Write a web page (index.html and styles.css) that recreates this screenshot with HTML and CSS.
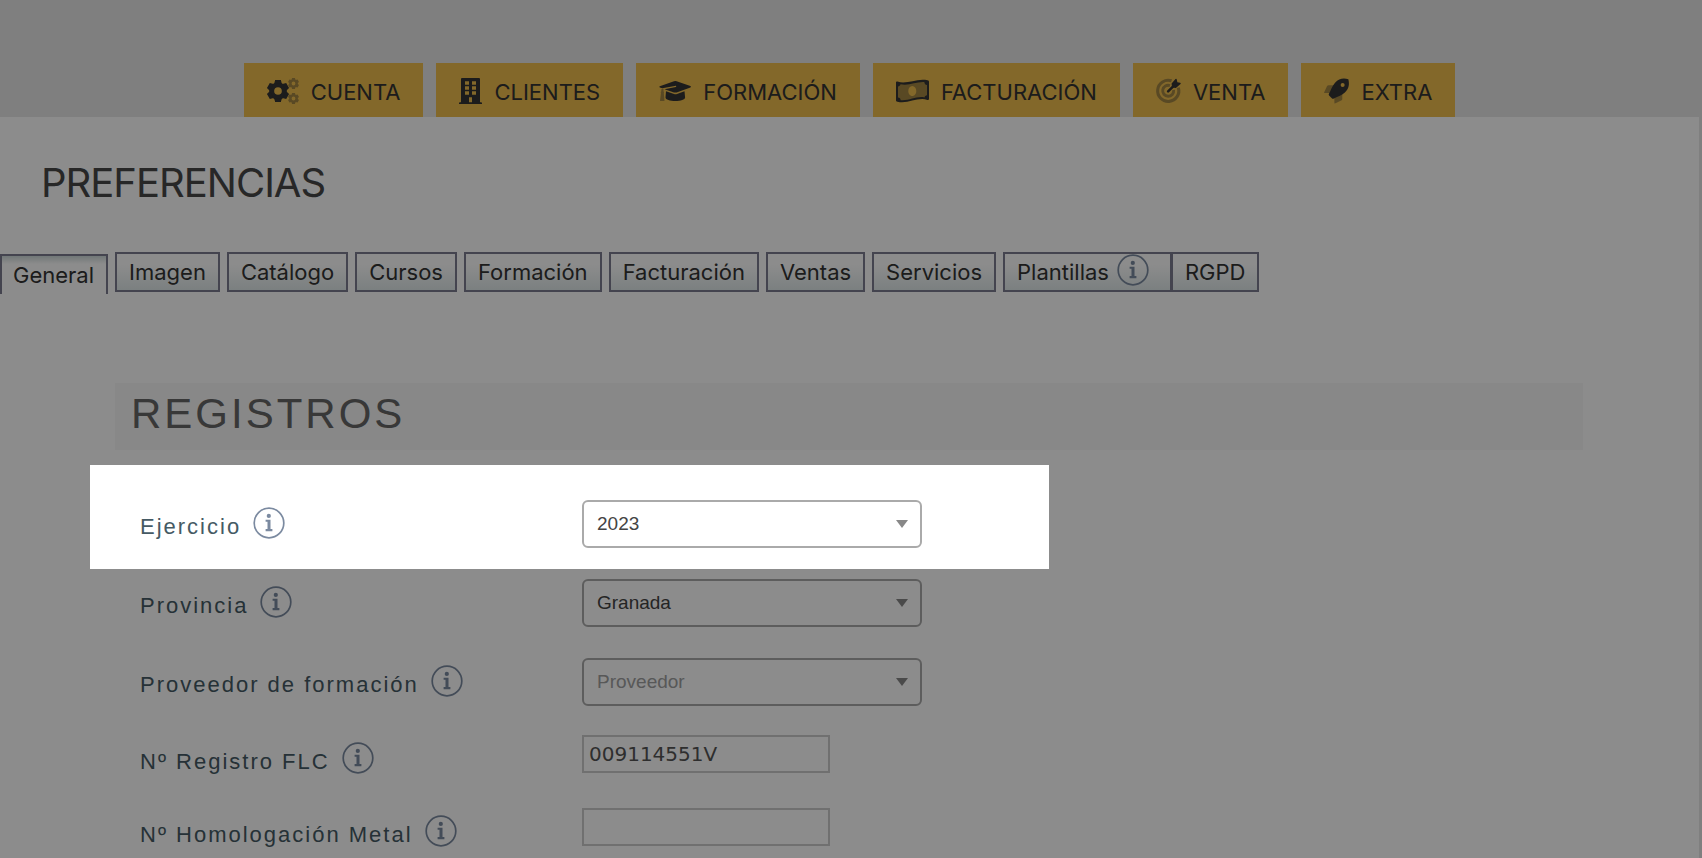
FILE: index.html
```html
<!DOCTYPE html>
<html lang="es">
<head>
    <meta charset="UTF-8">
    <meta name="viewport" content="width=device-width, initial-scale=1.0">
    <title>Preferencias</title>
    <link rel="stylesheet" href="styles.css">
</head>
<body>
    <!-- shared icons -->
    <svg class="sprite" aria-hidden="true">
        <symbol id="info" viewBox="0 0 32 32">
            <circle cx="16" cy="16" r="14.8" fill="none" stroke="currentColor" stroke-width="1.7"/>
            <circle cx="15.8" cy="8.9" r="2.1" fill="currentColor"/>
            <path d="M12.6 12.7h4.9v9.3h1.9v2.2h-6.8V22h1.9v-7.2h-1.9z" fill="currentColor"/>
        </symbol>
        <symbol id="gear" viewBox="-12 -12 24 24">
            <circle r="6.6" fill="none" stroke="currentColor" stroke-width="5.2"/>
            <path d="M-3-11.6h6l1 4h-8zM-3 11.6h6l1-4h-8z" fill="currentColor"/>
            <path d="M-3-11.6h6l1 4h-8zM-3 11.6h6l1-4h-8z" fill="currentColor" transform="rotate(60)"/>
            <path d="M-3-11.6h6l1 4h-8zM-3 11.6h6l1-4h-8z" fill="currentColor" transform="rotate(120)"/>
        </symbol>
    </svg>

    <header class="header">
        <nav class="main-nav">
            <a href="#">
                <svg width="32" height="26" viewBox="0 0 32 26">
                    <use href="#gear" x="-0.5" y="1.5" width="23" height="23"/>
                    <g class="faded">
                        <use href="#gear" x="20.8" y="-0.2" width="11.4" height="11.4"/>
                        <use href="#gear" x="20.8" y="14.8" width="11.4" height="11.4"/>
                    </g>
                </svg>
                <span>CUENTA</span>
            </a>
            <a href="#">
                <svg width="23" height="26" viewBox="0 0 23 26">
                    <path fill-rule="evenodd" d="M3 0h17q1 0 1 1v23.3h1q1 0 1 .8v.9H0v-.9q0-.8 1-.8h1V1q0-1 1-1zM6 3.2v3.6h4V3.2zM13 3.2v3.6h4V3.2zM6 8.2v3.6h4V8.2zM13 8.2v3.6h4V8.2zM6 13.2v3.6h4v-3.6zM13 13.2v3.6h4v-3.6zM10 19.2v5h3v-5z"/>
                </svg>
                <span>CLIENTES</span>
            </a>
            <a href="#">
                <svg width="32" height="26" viewBox="0 0 32 26">
                    <path d="M.8 8.2 15 3.2q1.300-.4 2.600 0l13.800 4.900q1.200.7 0 1.400l-13.800 4.900q-1.300.4-2.600 0L5.600 11.200l11.300-2.300q.8-.5 0-1.200L3.300 10.300.8 9.500q-1-.7 0-1.300z"/>
                    <path d="m7 13.300 8 2.700q1.500.4 3 0l7.500-2.700.6 6.200c0 2-4.500 3.600-9.700 3.600s-9.900-1.600-9.900-3.600z"/>
                    <path class="faded" d="M2.300 11.200 4.500 10.600v2.600q1 .8.300 1.900l.7 7.900H1l1-7.900q-.8-1.100.3-1.900z"/>
                </svg>
                <span>FORMACIÓN</span>
            </a>
            <a href="#">
                <svg width="33" height="26" viewBox="0 0 33 26">
                    <path class="faded" fill-rule="evenodd" d="M1.500 5.200C11.500 8.600 21.500 1 31.500 3.600v17.200c-10-3.400-20 4.200-30 1.600zM16.300 8c-2.300 0-4 2.200-4 5s1.700 5 4 5 4-2.200 4-5-1.700-5-4-5z"/>
                    <path fill-rule="evenodd" d="M0 4.600q0-1.400 1.400-1C11.300 6.900 20.500-.2 31.500 2.200 33 2.600 33 3 33 4v16.500q0 1.900-1.500 1.400C21.500 18.700 12 26.400 1.500 23.800 0 23.400 0 23 0 22zM4.500 6.300C4.100 7.700 3.300 8.300 2 8.500v11c1.600.1 2.500 1 2.700 2.800C14 23 20 17.900 28.500 19.400c.4-1.300 1.200-2 2.500-2.200V7C29.500 6.800 28.500 5.900 28.300 4 20 3.500 13.500 8 4.500 6.300z"/>
                </svg>
                <span>FACTURACIÓN</span>
            </a>
            <a href="#">
                <svg width="25" height="26" viewBox="0 0 26 26">
                    <g class="faded line">
                        <path d="M16.200 2.400A11 11 0 1 0 23.200 9.500" stroke-width="3.200"/>
                        <path d="M14.500 7.400A5.700 5.700 0 1 0 18.300 12" stroke-width="3"/>
                    </g>
                    <path class="line" d="m12.600 13.400 6.600-6.600" stroke-width="2.600" stroke-linecap="round"/>
                    <path d="M16.200 5.300 20.300.5q.9-.8 1.200.4l.7 2.900 2.900.7q1.200.3.400 1.200l-4.800 4.200-4-.5z"/>
                </svg>
                <span>VENTA</span>
            </a>
            <a href="#">
                <svg width="25" height="26" viewBox="0 0 26 26">
                    <path class="faded" d="M10.600 7H4.800q-1.200 0-1.700 1.100L.2 14.200q-.5 1 .8 1H6zM19 15.400v5.800q0 1.200-1.100 1.700l-6 2.900q-1.200.5-1.100-.8V20z"/>
                    <path fill-rule="evenodd" d="M25.300.7C20 -.6 15.500 0 11.500 4.300 8.300 7.800 7.200 12 5 16.200q-.3.800.3 1.400l3.100 3.100q.6.600 1.400.3C14 18.800 18.200 17.700 21.700 14.500 26 10.500 26.600 6 25.300.7zM19.400 4.600a2.100 2.100 0 1 1 0 4.200 2.100 2.100 0 0 1 0-4.200z"/>
                </svg>
                <span>EXTRA</span>
            </a>
        </nav>
    </header>

    <main class="page">
        <h1>PREFERENCIAS</h1>

        <div class="tabs">
            <button type="button" class="tab active">General</button>
            <button type="button" class="tab">Imagen</button>
            <button type="button" class="tab">Catálogo</button>
            <button type="button" class="tab">Cursos</button>
            <button type="button" class="tab">Formación</button>
            <button type="button" class="tab">Facturación</button>
            <button type="button" class="tab">Ventas</button>
            <button type="button" class="tab">Servicios</button>
            <button type="button" class="tab with-info">Plantillas <svg class="info"><use href="#info"/></svg></button>
            <button type="button" class="tab">RGPD</button>
        </div>

        <form class="section">
            <h2>REGISTROS</h2>

            <div class="rows select-rows">
                <div class="row">
                    <div class="spotlight"></div>
                    <label for="ejercicio">Ejercicio <svg class="info"><use href="#info"/></svg></label>
                    <div class="select">
                        <select id="ejercicio"><option>2023</option></select>
                    </div>
                </div>
                <div class="row">
                    <label for="provincia">Provincia <svg class="info"><use href="#info"/></svg></label>
                    <div class="select">
                        <select id="provincia"><option>Granada</option></select>
                    </div>
                </div>
                <div class="row">
                    <label for="proveedor">Proveedor de formación <svg class="info"><use href="#info"/></svg></label>
                    <div class="select">
                        <select id="proveedor" class="empty"><option value="">Proveedor</option></select>
                    </div>
                </div>
            </div>

            <div class="rows text-rows">
                <div class="row">
                    <label for="registro_flc">Nº Registro FLC <svg class="info"><use href="#info"/></svg></label>
                    <input type="text" id="registro_flc" value="009114551V">
                </div>
                <div class="row">
                    <label for="homologacion_metal">Nº Homologación Metal <svg class="info"><use href="#info"/></svg></label>
                    <input type="text" id="homologacion_metal">
                </div>
            </div>
        </form>
    </main>
</body>
</html>
```
FILE: styles.css
```css
* { box-sizing: border-box; }
html { overflow: hidden; }
body { margin: 0; height: 100vh; display: flex; flex-direction: column; overflow: hidden; background-color: #e7e7e7; color: #333; font-family: Inter, "Liberation Sans", sans-serif; }
.sprite { display: none; }

/* Main menu */
.header { padding-top: 63px; }
.main-nav { display: flex; justify-content: center; gap: 13px; margin-right: 3px; }
.main-nav a { display: flex; align-items: center; gap: 12px; height: 54px; padding: 2px 23px 0; background-color: #eebd4e; color: #333; font-size: 22px; line-height: 28px; text-decoration: none; }
.main-nav svg { fill: currentColor; overflow: visible; }
.main-nav span { padding-top: 2px; }
.faded { opacity: 0.4; }
.line { fill: none; stroke: currentColor; }

.page { flex: 1; min-height: 0; margin-right: 3px; background-color: #fff; }
h1 { margin: 0; padding: 41px 0 0 41px; font-size: 40px; line-height: 50px; font-weight: 400; letter-spacing: -1px; color: #484848; }

/* Tabs */
.tabs { display: flex; align-items: flex-start; gap: 7px; margin-top: 44px; height: 42px; }
.tab { height: 40px; padding: 0 12px; border: 2px solid #7d7d90; background: linear-gradient(#fff 30%, #e0e9ea); color: #333; font-family: inherit; font-size: 22px; line-height: 36px; white-space: nowrap; }
.tab.active { margin-top: 2px; padding: 0 12px 0 11px; border-bottom: 0; background: linear-gradient(#cfdada, #fff 8px); }
.tab.with-info { display: flex; gap: 8px; padding-right: 21px; margin-right: -8px; }
.info { flex: none; width: 32px; height: 32px; color: #7b8aa0; }

/* Form */
.section { margin: 89px 116px 0 115px; }
h2 { margin: 0; padding: 6px 16px 11px; background-color: #f8f8f8; font-family: "Liberation Sans", Arial, sans-serif; font-size: 42px; line-height: 50px; font-weight: 400; letter-spacing: 3px; color: #666; }
.rows { display: flex; flex-direction: column; padding-left: 25px; }
.select-rows { gap: 31px; margin-top: 50px; }
.text-rows { gap: 35px; margin-top: 29px; }
.row { position: relative; display: grid; grid-template-columns: 442px 1fr; align-items: start; }
.select-rows .row { height: 48px; }
.text-rows .row { height: 38px; }
label { display: flex; gap: 12px; padding-top: 7px; color: #455a64; font-family: "Liberation Sans", Arial, sans-serif; font-size: 22px; line-height: 40px; letter-spacing: 2px; white-space: nowrap; }
.select { position: relative; width: 340px; }
.select::after { content: ""; position: absolute; top: 20px; right: 14px; border: 6px solid transparent; border-top: 8px solid #888; border-bottom: 0; pointer-events: none; }
select { display: block; appearance: none; width: 100%; height: 48px; padding: 0 13px 2px; border: 2px solid #aaa; border-radius: 6px; background-color: #fff; color: #444; font-family: "Liberation Sans", Arial, sans-serif; font-size: 19px; }
select.empty { color: #a0a0a0; }
input { width: 248px; height: 38px; padding: 0 5px; border: 2px solid #ccc; background-color: #fff; color: #555; font-family: Verdana, "DejaVu Sans", sans-serif; font-size: 20px; }

/* Dims everything outside the highlighted row */
.spotlight { position: absolute; z-index: 10; top: -35px; left: -50px; width: 959px; height: 104px; box-shadow: 0 0 0 2000px rgba(0, 0, 0, 0.45); pointer-events: none; }
```
